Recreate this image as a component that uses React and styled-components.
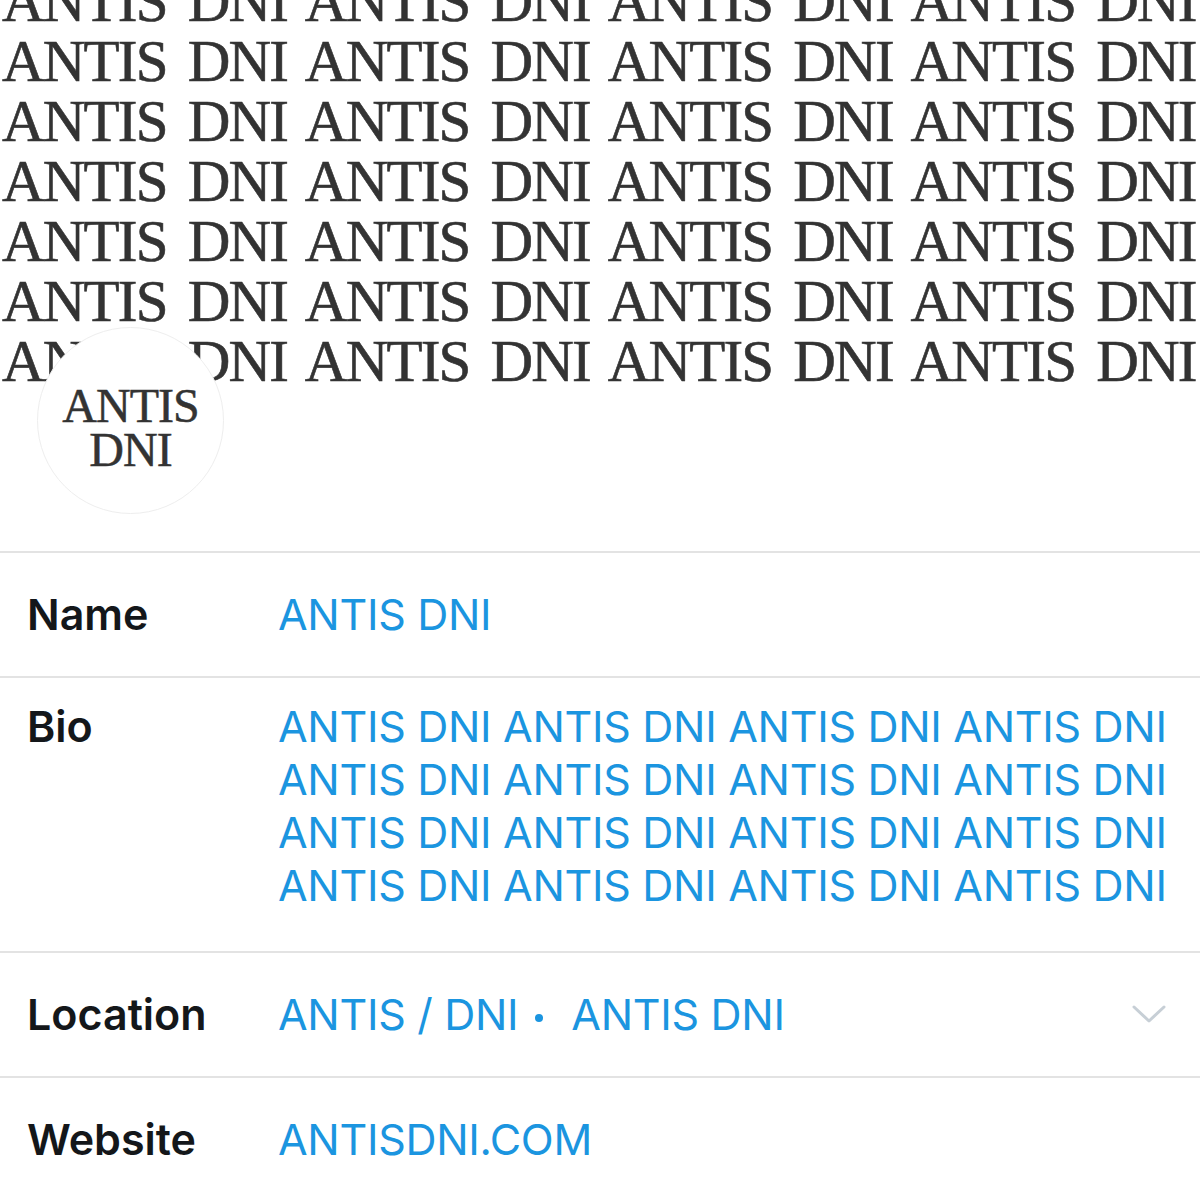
import styled, { createGlobalStyle } from 'styled-components';

const GlobalStyle = createGlobalStyle`
  body {
    margin: 0;
    background: #ffffff;
    font-family: Inter, 'Liberation Sans', sans-serif;
  }
`;

const PHRASE = 'ANTIS DNI';
const bannerLine = Array(4).fill(PHRASE).join(' ');
const bioText = Array(16).fill(PHRASE).join(' ');

const App = () => {
  return (
    <Page>
      <GlobalStyle />
      <Banner>
        <BannerText>
          {Array.from({ length: 7 }).map((_, i) => (
            <BannerLine key={i}>{bannerLine}</BannerLine>
          ))}
        </BannerText>
      </Banner>

      <AvatarWrap>
        <Avatar>
          <span>ANTIS</span>
          <span>DNI</span>
        </Avatar>
      </AvatarWrap>

      <Form>
        <Row>
          <Label>Name</Label>
          <Value>ANTIS DNI</Value>
        </Row>
        <Row $bio>
          <Label>Bio</Label>
          <Value>{bioText}</Value>
        </Row>
        <Row>
          <Label>Location</Label>
          <Value>
            ANTIS / DNI
            <Dot />
            ANTIS DNI
          </Value>
          <Chevron viewBox='0 0 36 20' width='36' height='20'>
            <polyline
              points='3,2 18,16 33,2'
              fill='none'
              stroke='#c7cfd6'
              strokeWidth='3'
              strokeLinecap='round'
              strokeLinejoin='round'
            />
          </Chevron>
        </Row>
        <Row>
          <Label>Website</Label>
          <Value>ANTISDNI.COM</Value>
        </Row>
      </Form>
    </Page>
  );
};

export default App;

const Page = styled.div`
  width: 1200px;
  height: 1185px;
  overflow: hidden;
  background: #ffffff;
`;

const Banner = styled.div`
  height: 390px;
  overflow: hidden;
  background: #ffffff;
`;

const BannerText = styled.div`
  margin-top: -29px;
  padding-left: 2px;
  font-family: 'Liberation Serif', 'DejaVu Serif', serif;
  font-size: 59px;
  line-height: 60px;
  color: #333333;
  letter-spacing: -1.8px;
  word-spacing: 8px;
  -webkit-text-stroke: 0.6px #333333;
`;

const BannerLine = styled.div`
  white-space: nowrap;
`;

const AvatarWrap = styled.div`
  position: relative;
  z-index: 1;
  margin: -63px 0 0 37px;
  width: 187px;
  height: 187px;
`;

const Avatar = styled.div`
  box-sizing: border-box;
  width: 187px;
  height: 187px;
  border-radius: 50%;
  background: #ffffff;
  border: 1.5px solid #eeeeee;
  display: flex;
  flex-direction: column;
  align-items: center;
  justify-content: center;
  padding-top: 14px;
  font-family: 'Liberation Serif', 'DejaVu Serif', serif;
  font-size: 48px;
  line-height: 44px;
  color: #333333;
  letter-spacing: -1px;
  -webkit-text-stroke: 0.5px #333333;
`;

const Form = styled.div`
  margin-top: 37px;
`;

const Row = styled.div`
  display: grid;
  grid-template-columns: 253px 1fr auto;
  align-items: start;
  border-top: 2px solid #e3e3e3;
  padding: ${(p) => (p.$bio ? '22px 8px 39px 27px' : '35px 33px 35px 27px')};
`;

const Label = styled.div`
  font-size: 43px;
  line-height: 53px;
  font-weight: 600;
  color: #14171a;
`;

const Value = styled.div`
  font-size: 43px;
  line-height: 53px;
  font-weight: 400;
  letter-spacing: -0.3px;
  margin-left: -2px;
  color: #1b95e0;
  display: flex;
  flex-wrap: wrap;
  align-items: center;
`;

const Dot = styled.span`
  width: 8px;
  height: 8px;
  border-radius: 50%;
  background: #1b95e0;
  margin: 6px 28px 0 17px;
`;

const Chevron = styled.svg`
  margin-top: 17px;
`;
